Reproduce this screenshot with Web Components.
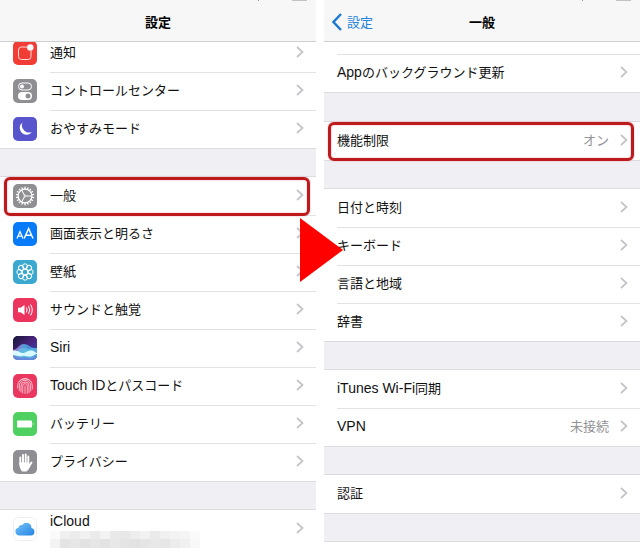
<!DOCTYPE html>
<html lang="ja">
<head>
<meta charset="utf-8">
<meta name="viewport" content="width=device-width, initial-scale=1">
<title>設定</title>
<style>
  body { margin: 0; background: #fff; color: #111; font: 13px/20px "Noto Sans CJK JP", sans-serif; }
  .latin { font-family: "Liberation Sans", "Noto Sans CJK JP", sans-serif; font-size: 14px; }
</style>
</head>
<body>
<settings-guide>
  <settings-pane heading="設定">
    <settings-group scrolled>
      <settings-row><app-icon slot="icon" name="notify"></app-icon>通知</settings-row>
      <settings-row><app-icon slot="icon" name="control"></app-icon>コントロールセンター</settings-row>
      <settings-row><app-icon slot="icon" name="moon"></app-icon>おやすみモード</settings-row>
    </settings-group>
    <settings-group>
      <settings-row marked><app-icon slot="icon" name="gear"></app-icon>一般</settings-row>
      <settings-row><app-icon slot="icon" name="display"></app-icon>画面表示と明るさ</settings-row>
      <settings-row><app-icon slot="icon" name="wallpaper"></app-icon>壁紙</settings-row>
      <settings-row><app-icon slot="icon" name="sound"></app-icon>サウンドと触覚</settings-row>
      <settings-row><app-icon slot="icon" name="siri"></app-icon><span class="latin">Siri</span></settings-row>
      <settings-row><app-icon slot="icon" name="touch"></app-icon><span class="latin">Touch ID</span>とパスコード</settings-row>
      <settings-row><app-icon slot="icon" name="battery"></app-icon>バッテリー</settings-row>
      <settings-row><app-icon slot="icon" name="hand"></app-icon>プライバシー</settings-row>
    </settings-group>
    <settings-group>
      <settings-row><app-icon slot="icon" name="cloud"></app-icon><span class="latin">iCloud</span><masked-text slot="detail"></masked-text></settings-row>
    </settings-group>
  </settings-pane>
  <settings-pane heading="一般" back="設定">
    <settings-group clipped>
      <settings-row><span class="latin">App</span>のバックグラウンド更新</settings-row>
    </settings-group>
    <settings-group>
      <settings-row marked>機能制限<span slot="value">オン</span></settings-row>
    </settings-group>
    <settings-group>
      <settings-row>日付と時刻</settings-row>
      <settings-row>キーボード</settings-row>
      <settings-row>言語と地域</settings-row>
      <settings-row>辞書</settings-row>
    </settings-group>
    <settings-group>
      <settings-row><span class="latin">iTunes Wi-Fi</span>同期</settings-row>
      <settings-row><span class="latin">VPN</span><span slot="value">未接続</span></settings-row>
    </settings-group>
    <settings-group>
      <settings-row>認証</settings-row>
    </settings-group>
    <settings-group>
      <settings-row></settings-row>
    </settings-group>
  </settings-pane>
</settings-guide>

<script>
const define = (name, html, setup) => {
  const template = document.createElement('template');
  template.innerHTML = html;
  customElements.define(name, class extends HTMLElement {
    constructor() {
      super();
      this.attachShadow({ mode: 'open' }).append(template.content.cloneNode(true));
    }
    connectedCallback() { if (setup) setup(this, this.shadowRoot); }
  });
};

define('settings-guide', `
  <style>
    :host { display: block; position: relative; height: 100vh; overflow: hidden; }
    main { display: grid; grid-template-columns: 1fr 1fr; gap: 8px; height: 100%; }
    .arrow { position: absolute; left: calc(50% - 20px); top: 218px; width: 43px; height: 64px; fill: #fe0000; z-index: 2; }
  </style>
  <main><slot></slot></main>
  <svg class="arrow" viewBox="0 0 43 64" aria-hidden="true"><path d="M0 0L43 32L0 64Z"/></svg>`);

define('settings-pane', `
  <style>
    :host { display: flex; flex-direction: column; min-width: 0; overflow: hidden; background: #efeff4; }
    header { position: relative; z-index: 1; flex: none; box-sizing: border-box; height: 42px; padding: 3px 8px 0;
      display: grid; grid-template-columns: 1fr auto 1fr; align-items: center;
      background: #f7f7f8; border-bottom: 1px solid #cfcfd2; }
    h1 { grid-column: 2; margin: 0; font-size: 13px; line-height: 20px; font-weight: 700; color: #000; }
    a { grid-column: 1; justify-self: start; display: flex; align-items: center; gap: 5px; color: #2483d8; text-decoration: none; }
    a[hidden] { display: none; }
    a svg { width: 10px; height: 18px; fill: none; stroke: #1c79d0; stroke-width: 2.4; }
    .status { position: absolute; top: 0; right: 8px; width: 52px; height: 2px; }
    .list { flex: 1; min-height: 0; display: flex; flex-direction: column; gap: 29px; }
  </style>
  <header>
    <svg class="status" viewBox="0 0 52 2" aria-hidden="true"><path d="M2 0h1v1h-1z" fill="#999"/><path d="M36 0h15v1h-15z" fill="#c2c2c4"/></svg>
    <a href="#" hidden><svg viewBox="0 0 10 18" aria-hidden="true"><path d="M9 1L1.500 9L9 17"/></svg><span></span></a>
    <h1></h1>
  </header>
  <div class="list"><slot></slot></div>`,
  (host, root) => {
    root.querySelector('h1').textContent = host.getAttribute('heading');
    const back = host.getAttribute('back');
    if (back) {
      root.querySelector('a').hidden = false;
      root.querySelector('a span').textContent = back;
    }
  });

define('settings-group', `
  <style>
    :host { display: block; flex: none; background: #fff; box-shadow: 0 -1px #dcdce0, 0 1px #dcdce0; }
    :host([scrolled]) { margin-top: -8px; }
    :host([clipped]) { padding-top: 12px; margin-bottom: 1px; --first-line: #e3e3e6; }
  </style>
  <slot></slot>`);

define('settings-row', `
  <style>
    :host { display: block; position: relative; }
    :host([marked])::after { content: ""; position: absolute; inset: 0 6px -1px 4px; z-index: 1;
      border: 3px solid #bd1a1d; border-radius: 6px; pointer-events: none; box-shadow: 0 0 2px #f3a9ad, inset 0 0 2px #f3a9ad; }
    a { display: flex; gap: 13px; height: 38px; padding-left: 13px; color: inherit; text-decoration: none; }
    slot[name=icon]::slotted(*) { align-self: center; }
    .line { flex: 1; min-width: 0; display: flex; align-items: center; gap: 11px; padding: 0 12px 3px 0; border-top: 1px solid #e3e3e6; box-sizing: border-box; }
    :host(:first-child) .line { border-top-color: var(--first-line, transparent); }
    .label { flex: 1; min-width: 0; display: flex; flex-direction: column; white-space: nowrap; }
    .value { color: #929297; }
    svg { flex: none; width: 8px; height: 12px; fill: none; stroke: #c4c4c8; stroke-width: 1.7; }
  </style>
  <a href="#">
    <slot name="icon"></slot>
    <span class="line">
      <span class="label"><span><slot></slot></span><slot name="detail"></slot></span>
      <span class="value"><slot name="value"></slot></span>
      <svg viewBox="0 0 8 12" aria-hidden="true"><path d="M1 1L6.500 6L1 11"/></svg>
    </span>
  </a>`);

define('masked-text', `
  <style>
    :host { display: block; height: 14px; width: 150px; }
    svg { display: block; width: 150px; height: 17px; }
  </style>
  <svg viewBox="0 0 150 17" aria-hidden="true" shape-rendering="crispEdges"></svg>`,
  (host, root) => {
    const shades = [
      ['#fafafa', '#f0f0f0', '#ececec', '#f1f1f1', '#ebebeb', '#f3f3f3', '#e9e9e9', '#e7e7e7', '#ededed', '#f2f2f2', '#eaeaea', '#f0f0f0', '#f3f3f3', '#f5f5f5', '#fafafa'],
      ['#f3f3f3', '#e4e4e4', '#e7e7e7', '#e2e2e2', '#e6e6e6', '#e3e3e3', '#e8e8e8', '#e4e4e4', '#e2e2e2', '#e5e5e5', '#e8e8e8', '#e6e6e6', '#ececec', '#f0f0f0', '#f8f8f8']
    ];
    root.querySelector('svg').innerHTML = shades.map((row, y) =>
      row.map((c, x) => `<rect x="${x * 10}" y="${y * 8}" width="10" height="9" fill="${c}"/>`).join('')).join('');
  });

const ring = (n, fn) => Array.from({ length: n }, (_, i) => fn(i * 360 / n)).join('');
const icons = {
  notify: ['#f03e36', `<path d="M14 6H8.500Q5.500 6 5.500 9v6.500q0 3 3 3h6.500q3 0 3-3V10" fill="none" stroke="#ffd9d6"/><circle cx="17.300" cy="6.500" r="3.200" fill="#fff"/>`],
  control: ['#8e8e93', `<rect x="5.500" y="4" width="13" height="7" rx="3.500" fill="none" stroke="#fff"/><circle cx="9" cy="7.500" r="2" fill="#fff"/><rect x="5" y="13" width="14" height="8" rx="4" fill="#fff"/><circle cx="15" cy="17" r="2.500" fill="#8e8e93"/>`],
  moon: ['#5855cd', `<path d="M9.500 5.500a6.800 6.800 0 1 0 9.500 9.500A7.300 7.300 0 0 1 9.500 5.500Z" fill="#fff"/>`],
  gear: ['#8e8e93', `<g fill="none" stroke="#fff"><circle cx="12" cy="12" r="6.800" stroke-width="1.200"/>${ring(18, a => `<path d="M12 2.800v2.200" stroke-width="1.300" transform="rotate(${a} 12 12)"/>`)}<circle cx="12" cy="12" r="1" stroke-width=".8"/>${ring(3, a => `<path d="M13 12h5.500" stroke-width="1" transform="rotate(${a} 12 12)"/>`)}</g>`],
  display: ['#087cf8', `<g fill="none" stroke="#fff"><path d="M4 16.500L7 9.500L10 16.500M5 14.200h4" stroke-width="1.200"/><path d="M11.200 16.500L15.600 6.500L20 16.500M12.800 13.200h5.600" stroke-width="1.500"/></g>`],
  wallpaper: ['#3aa8cf', `<g fill="none" stroke="#fff" stroke-width="1">${ring(8, a => `<circle cx="12" cy="6.300" r="2.500" transform="rotate(${a} 12 12)"/>`)}<circle cx="12" cy="12" r="2.800"/></g>`],
  sound: ['#ec355e', `<path d="M5 9.800h2.500L11.500 7v10l-4-2.800H5Z" fill="#fff"/><g fill="none" stroke="#fff"><path d="M13.300 9.500q1.600 2.500 0 5"/><path d="M15.500 8q2.500 4 0 8"/><path d="M17.500 6.500q3.500 5.500 0 11"/></g>`],
  siri: ['#241f50', `<defs><linearGradient id="s" x2="1" y2="1"><stop stop-color="#151735"/><stop offset=".5" stop-color="#4a237f"/><stop offset="1" stop-color="#2b55b6"/></linearGradient><linearGradient id="w" x2="1"><stop stop-color="#c070e0"/><stop offset=".5" stop-color="#53b4e8"/><stop offset="1" stop-color="#3d6edc"/></linearGradient></defs><path d="M0 0h24v24H0z" fill="url(#s)"/><path d="M0 14C5 13 6 8 11 8S18 13 24 12v12H0Z" fill="url(#w)" opacity=".85"/><path d="M0 17C4 17 5 12 10 12S15 14 18 12T24 12v12H0Z" fill="#62cbe8" opacity=".6"/><path d="M0 14.500C5 14 7 17 10 17S14 14.500 18 14.500S22 17 24 17v1C21 18 21 20.500 17 20.500S12 19 9 20S4 19 0 19Z" fill="#d8fbff"/><path d="M0 20C4 20 5 22 9 21.500S13 21 16 22S22 20 24 20v4H0Z" fill="#6488dc"/>`],
  touch: ['#e9375f', `<g fill="none" stroke="#ffdbe3" stroke-width=".8" stroke-linecap="round"><path d="M6 7.500a7.500 7.500 0 0 1 12 0M4.700 14v-2a7.300 7.300 0 0 1 14.600 0v3M6.300 16.500V12a5.700 5.700 0 0 1 11.400 0v5M8 18v-6a4 4 0 0 1 8 0v6.500M9.700 19v-7a2.300 2.300 0 0 1 4.600 0v7.500M12 12v7.500"/></g>`],
  battery: ['#4fd162', `<rect x="4" y="8.500" width="15" height="7" rx="1" fill="#fff"/><path d="M19.800 10.500q1.700 1.500 0 3Z" fill="#fff"/>`],
  hand: ['#8e8e93', `<g fill="none" stroke="#fff" stroke-width="1.900" stroke-linecap="round"><path d="M7.300 7.500v7M10 5v9M12.700 4.500v9M15.300 6.500v8M18.500 12.500l-2.800 4.500"/></g><path d="M6.350 12.500h9.900v2.500l1.200 1q-2 4.500-4.200 5.500h-4q-2.900-2.500-2.900-9Z" fill="#fff"/>`],
  cloud: ['#fff', `<defs><linearGradient id="c" x2="1" y2="1"><stop stop-color="#75c3f7"/><stop offset="1" stop-color="#2583e3"/></linearGradient></defs><rect x=".5" y=".5" width="23" height="23" rx="5" fill="#fff" stroke="#eeeef0"/><path d="M6 18.500a3.900 3.900 0 0 1-.5-7.700a3.300 3.300 0 0 1 3.700-2.700a5 5 0 0 1 9.200 2.900a3.800 3.800 0 0 1-.4 7.500Z" fill="url(#c)"/>`]
};

define('app-icon', `
  <style>
    :host { display: block; flex: none; width: 24px; height: 24px; border-radius: 5px; overflow: hidden; }
    svg { display: block; width: 100%; height: 100%; }
  </style>
  <svg viewBox="0 0 24 24" aria-hidden="true"></svg>`,
  (host, root) => {
    const [color, art] = icons[host.getAttribute('name')];
    host.style.background = color;
    root.querySelector('svg').innerHTML = art;
  });
</script>
</body>
</html>
